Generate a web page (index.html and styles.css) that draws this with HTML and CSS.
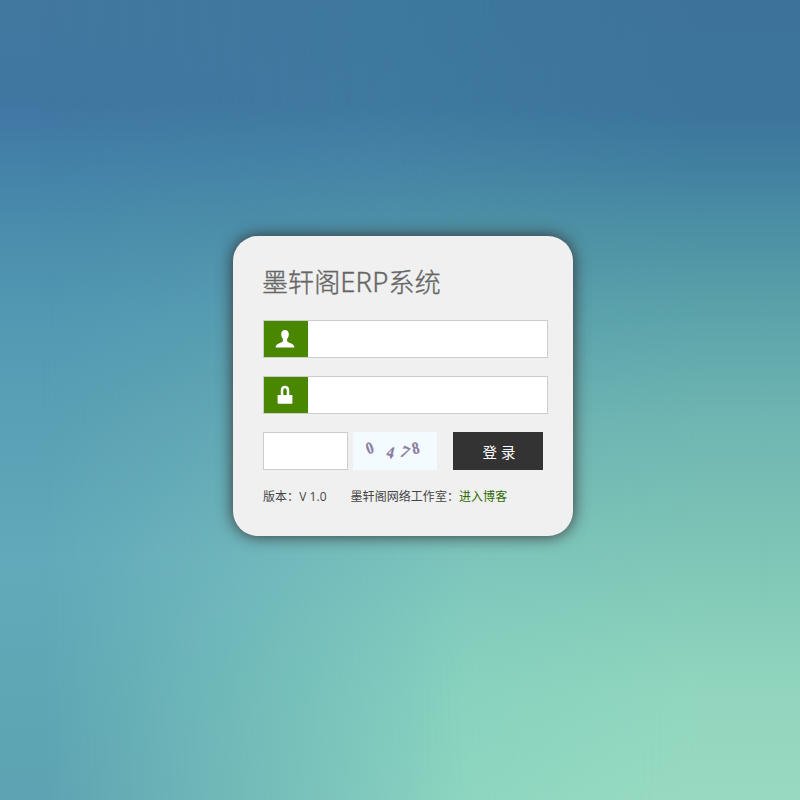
FILE: index.html
```html
<!DOCTYPE html>
<html lang="zh-CN">
<head>
<meta charset="utf-8">
<title>墨轩阁ERP系统</title>
<link rel="stylesheet" href="styles.css">
</head>
<body>
<form class="login">
  <h1 class="title">墨轩阁<span class="latin">ERP</span>系统</h1>
  <div class="field">
    <span class="field-icon">
      <svg width="20" height="20" viewBox="0 0 20 20" fill="#fff"><path d="M10 1C7.500 1 6.200 2.700 6.200 5.200C6.200 7.400 7 8.900 7.900 9.800V12.200C7.500 13.800 1 13.800.5 18.500H19.500C19 13.800 12.500 13.800 12.100 12.200V9.800C13 8.900 13.800 7.400 13.800 5.200C13.800 2.700 12.500 1 10 1Z"/></svg>
    </span>
    <input class="field-input" type="text" aria-label="用户名">
  </div>
  <div class="field">
    <span class="field-icon">
      <svg width="20" height="20" viewBox="0 0 20 20"><path d="M7 11V5.500C7 3.100 8 2 10 2S13 3.100 13 5.500V11" fill="none" stroke="#fff" stroke-width="2.500"/><rect x="2.600" y="10" width="14.800" height="8.700" rx=".6" fill="#fff"/></svg>
    </span>
    <input class="field-input" type="password" aria-label="密码">
  </div>
  <div class="verify">
    <input class="code-input" type="text" aria-label="验证码">
    <svg class="captcha" width="84" height="38" viewBox="0 0 84 38">
      <text transform="translate(16.700 16) rotate(-18) scale(.85 1)" y="5.600">0</text>
      <text transform="translate(37.500 20.500) rotate(14) scale(.85 1)" y="5.600">4</text>
      <text transform="translate(52 20) rotate(24) scale(.95 1)" y="5.600">7</text>
      <text transform="translate(62.500 16) rotate(-12) scale(.85 1)" y="5.600">8</text>
    </svg>
    <button class="submit" type="button">登 录</button>
  </div>
  <p class="footer"><span>版本：V 1.0</span><span>墨轩阁网络工作室：<a class="link" href="#">进入博客</a></span></p>
</form>
</body>
</html>
```
FILE: styles.css
```css
* {
  box-sizing: border-box;
}

body {
  margin: 0;
  height: 800px;
  padding: 236px 0 0 233px;
  overflow: hidden;
  position: relative;
  font-family: "Open Sans", "Noto Sans CJK SC", sans-serif;
  background: linear-gradient(#4178a0 0, #3f77a2 105px, #437fa8 150px, #488aab 210px, #5298b2 310px, #5aa0b5 420px, #62a9bb 560px, #5fa7b5 680px, #5da3b3 800px);
}

/* Backdrop columns blended across the page */
body::before,
body::after {
  content: "";
  position: absolute;
  inset: 0;
  z-index: -1;
}

body::before {
  background: linear-gradient(#3d789f 0, #3f799f 105px, #4784a5 165px, #4d8fa5 215px, #5ba2b0 320px, #6cb3b6 430px, #7bc3bc 540px, #82ccbe 620px, #87d2bf 700px, #8cd5c0 800px);
  mask-image: linear-gradient(90deg, transparent 40px, #000 470px);
}

body::after {
  background: linear-gradient(#3d739b 0, #3c759c 115px, #417e9f 160px, #4b8fa4 225px, #5ca4aa 320px, #6fb5b2 420px, #7bc1b4 520px, #85cbb9 600px, #91d5be 690px, #98dac1 800px);
  mask-image: linear-gradient(90deg, transparent 400px, #000 700px);
}

.login {
  width: 340px;
  height: 300px;
  padding: 26px 25px 0 30px;
  border-radius: 25px;
  background: #f0f0f0;
  box-shadow: 0 0 16px #333;
}

.title {
  margin: 0 0 18px -1px;
  height: 40px;
  line-height: 40px;
  font-size: 26px;
  font-weight: 300;
  letter-spacing: .1px;
  color: #666;
  -webkit-text-stroke: .35px #666;
  font-family: "Noto Sans", "Noto Sans CJK SC", sans-serif;
}

.latin {
  font-size: 27.500px;
  line-height: 1;
}

.field {
  display: flex;
  width: 285px;
  height: 38px;
  margin-bottom: 18px;
  border: 1px solid #ccc;
  background: #fff;
}

.field-icon {
  display: flex;
  align-items: center;
  justify-content: center;
  width: 44px;
  padding-right: 2px;
  background: #4a8700;
}

.field-input {
  flex: 1;
  min-width: 0;
  border: 0;
  outline: 0;
  background: #fff;
}

.verify {
  display: flex;
  height: 38px;
}

.code-input {
  width: 85px;
  border: 1px solid #ccc;
  background: #fff;
}

.captcha {
  margin: 0 16px 0 5px;
  background: #f3fbfe;
  font: bold 17px "Liberation Serif", serif;
  fill: #8d7b9e;
  stroke: #8d7b9e;
  stroke-width: .2;
  text-anchor: middle;
}

.submit {
  width: 90px;
  padding: 0 0 0 2px;
  border: 0;
  background: #333;
  color: #fff;
  font: 14.500px "Open Sans", "Noto Sans CJK SC", sans-serif;
}

.footer {
  display: flex;
  gap: 24px;
  margin: 17px 0 0;
  line-height: 20px;
  font-size: 12px;
  letter-spacing: .05px;
  color: #444;
  white-space: nowrap;
}

.link {
  color: #2c6a00;
  text-decoration: none;
}
```
